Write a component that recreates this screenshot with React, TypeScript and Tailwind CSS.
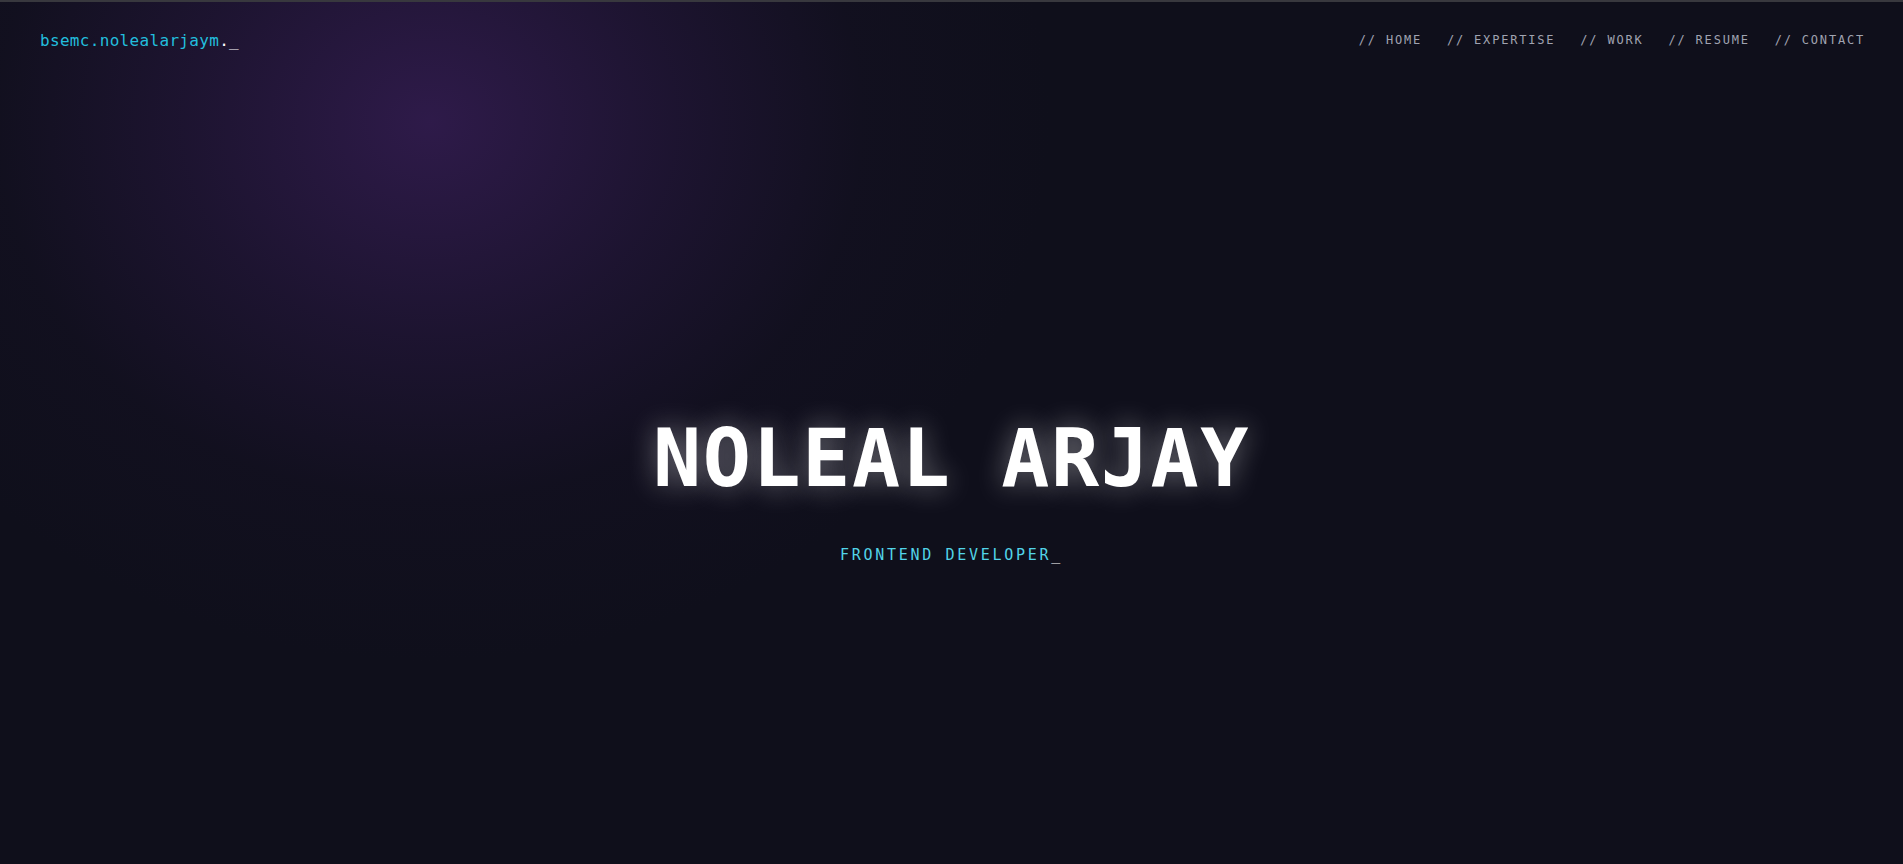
import React from "react";

const navItems = ["HOME", "EXPERTISE", "WORK", "RESUME", "CONTACT"];

export default function App() {
  return (
    <div className="relative min-h-screen overflow-hidden border-t-2 border-[#38383e] bg-[#0f0f1b] bg-[radial-gradient(ellipse_620px_540px_at_430px_120px,rgba(48,27,76,0.95),rgba(38,23,62,0.6)_40%,rgba(24,18,40,0.3)_70%,transparent_100%)] font-['DejaVu_Sans_Mono','Liberation_Mono',monospace]">
      {/* header */}
      <header className="absolute left-0 top-0 z-10 flex w-full items-start justify-between pl-10 pr-[38px] pt-[27px]">
        <a className="text-base leading-6 tracking-[0.02em] text-[#22bedd]">
          bsemc.nolealarjaym<span className="text-white">._</span>
        </a>
        <nav className="mt-[3px] flex gap-[25px]">
          {navItems.map((item) => (
            <a
              key={item}
              className="text-xs leading-4 tracking-[0.15em] text-[#a0a3b1] hover:text-white"
            >
              // {item}
            </a>
          ))}
        </nav>
      </header>

      {/* hero */}
      <section className="flex h-screen flex-col items-center justify-center pt-[117px]">
        <h1 className="text-[80px] font-bold leading-none tracking-[0.02em] text-white [text-shadow:0_0_28px_rgba(255,255,255,0.42)]">
          NOLEAL ARJAY
        </h1>
        <p className="mt-[45px] text-[15px] leading-[22px] tracking-[0.18em] text-[#52d4e8]">
          FRONTEND DEVELOPER<span className="text-white">_</span>
        </p>
      </section>
    </div>
  );
}
